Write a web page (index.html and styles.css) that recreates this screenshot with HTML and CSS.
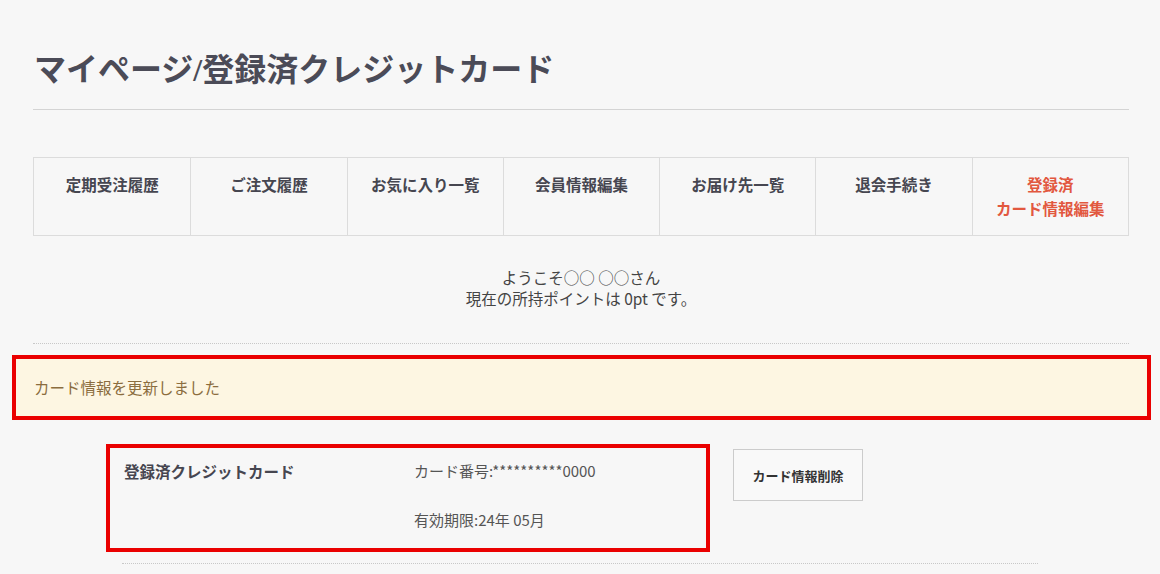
FILE: index.html
```html
<!DOCTYPE html>
<html lang="ja">
<head>
    <meta charset="UTF-8">
    <meta name="viewport" content="width=device-width, initial-scale=1.0">
    <title>マイページ/登録済クレジットカード</title>
    <link rel="stylesheet" href="styles.css">
</head>
<body>
    <div id="wrapper">
        <h1 class="page-title">マイページ/登録済クレジットカード</h1>

        <ul class="mypage-nav">
            <li><a href="#">定期受注履歴</a></li>
            <li><a href="#">ご注文履歴</a></li>
            <li><a href="#">お気に入り一覧</a></li>
            <li><a href="#">会員情報編集</a></li>
            <li><a href="#">お届け先一覧</a></li>
            <li><a href="#">退会手続き</a></li>
            <li class="current"><a href="#">登録済<br>カード情報編集</a></li>
        </ul>

        <div class="welcome">
            <p>ようこそ○○ ○○さん</p>
            <p>現在の所持ポイントは 0pt です。</p>
        </div>

        <div class="alert">カード情報を更新しました</div>

        <div class="card-list">
            <div class="card-row">
                <div class="card-info">
                    <div class="card-label">登録済クレジットカード</div>
                    <div class="card-detail">
                        <p>カード番号:**********0000</p>
                        <p>有効期限:24年 05月</p>
                    </div>
                </div>
                <button class="btn-delete" type="button">カード情報削除</button>
            </div>
        </div>
    </div>
</body>
</html>
```

FILE: styles.css
```css
body {
    margin: 0;
    padding: 0;
    background-color: #f7f7f7;
    color: #444;
    font-family: "Noto Sans CJK JP", sans-serif;
    font-size: 15px;
}

#wrapper {
    width: 1096px;
    margin-left: 33px;
    padding-top: 48px;
}

.page-title {
    margin: 0;
    padding: 0 0 0 1px;
    height: 61px;
    border-bottom: 1px solid #d4d4d4;
    font-family: "Liberation Serif", "Noto Sans CJK JP", serif;
    font-size: 32px;
    font-weight: bold;
    line-height: 44px;
    color: #4b4b57;
}

/* マイページメニュー */
.mypage-nav {
    list-style: none;
    margin: 47px 0 0;
    padding: 0;
    display: grid;
    grid-template-columns: repeat(7, 1fr);
    border: 1px solid #dcdcdc;
    height: 77px;
}

.mypage-nav li {
    border-left: 1px solid #dcdcdc;
    text-align: center;
    padding-top: 14px;
}

.mypage-nav li:first-child {
    border-left: none;
}

.mypage-nav a {
    color: #464650;
    font-weight: bold;
    font-size: 15.5px;
    line-height: 24px;
    text-decoration: none;
}

.mypage-nav li.current a {
    color: #e2583f;
}

.welcome {
    text-align: center;
    padding: 31px 0 34px;
    border-bottom: 1px dotted #c8c8c8;
    color: #444;
}

.welcome p {
    margin: 0;
    font-size: 15.5px;
    line-height: 21px;
}

.alert {
    margin: 11px -22px 0 -21px;
    height: 57px;
    border: 4px solid #ea0000;
    background-color: #fdf6e2;
    color: #8b6d3e;
    font-size: 15.5px;
    line-height: 57px;
    padding-left: 18px;
}

.card-list {
    width: 916px;
    margin: 24px 0 0 89px;
}

.card-row {
    display: flex;
    align-items: flex-start;
    border-bottom: 1px dotted #c8c8c8;
    padding-bottom: 11px;
}

.card-info {
    display: flex;
    width: 604px;
    height: 108px;
    box-sizing: border-box;
    margin-left: -16px;
    border: 4px solid #ea0000;
    padding: 11px 14px;
}

.card-label {
    width: 290px;
    font-weight: bold;
    color: #464650;
    font-size: 15.5px;
    line-height: 24px;
}

.card-detail p {
    margin: 0 0 25px;
    font-size: 15px;
    line-height: 24px;
    color: #555;
}

.btn-delete {
    margin: 5px 0 0 23px;
    width: 130px;
    height: 52px;
    border: 1px solid #cccccc;
    background-color: #f9f9f9;
    font-family: "Liberation Serif", "Noto Sans CJK JP", serif;
    font-weight: bold;
    font-size: 13px;
    color: #333;
}
```
